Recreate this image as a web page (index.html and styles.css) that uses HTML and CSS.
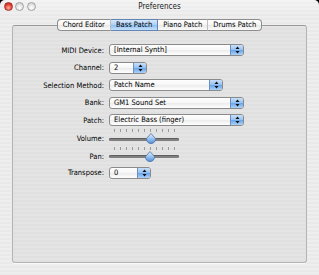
FILE: index.html
```html
<!DOCTYPE html>
<html lang="en">
<head>
    <meta charset="UTF-8">
    <title>Preferences</title>
    <link rel="stylesheet" href="styles.css">
</head>
<body>
<div class="window">
    <div class="titlebar">
        <div class="lights">
            <span class="light close"></span>
            <span class="light"></span>
            <span class="light"></span>
        </div>
        <div class="title">Preferences</div>
    </div>

    <div class="tabview">
        <div class="tabs">
            <span class="tab">Chord Editor</span>
            <span class="tab selected">Bass Patch</span>
            <span class="tab">Piano Patch</span>
            <span class="tab">Drums Patch</span>
        </div>

        <div class="panel">
            <div class="row">
                <label>MIDI Device:</label>
                <div class="popup w-long"><span class="value">[Internal Synth]</span><span class="arrows"><svg width="5" height="8" viewBox="0 0 5 8"><path d="M2.5 0.5 L4.5 3 H0.5 Z M0.5 5 H4.5 L2.5 7.5 Z"/></svg></span></div>
            </div>
            <div class="row">
                <label>Channel:</label>
                <div class="popup w-channel"><span class="value">2</span><span class="arrows"><svg width="5" height="8" viewBox="0 0 5 8"><path d="M2.5 0.5 L4.5 3 H0.5 Z M0.5 5 H4.5 L2.5 7.5 Z"/></svg></span></div>
            </div>
            <div class="row">
                <label>Selection Method:</label>
                <div class="popup w-method"><span class="value">Patch Name</span><span class="arrows"><svg width="5" height="8" viewBox="0 0 5 8"><path d="M2.5 0.5 L4.5 3 H0.5 Z M0.5 5 H4.5 L2.5 7.5 Z"/></svg></span></div>
            </div>
            <div class="row">
                <label>Bank:</label>
                <div class="popup w-long"><span class="value">GM1 Sound Set</span><span class="arrows"><svg width="5" height="8" viewBox="0 0 5 8"><path d="M2.5 0.5 L4.5 3 H0.5 Z M0.5 5 H4.5 L2.5 7.5 Z"/></svg></span></div>
            </div>
            <div class="row">
                <label>Patch:</label>
                <div class="popup w-long"><span class="value">Electric Bass (finger)</span><span class="arrows"><svg width="5" height="8" viewBox="0 0 5 8"><path d="M2.5 0.5 L4.5 3 H0.5 Z M0.5 5 H4.5 L2.5 7.5 Z"/></svg></span></div>
            </div>

            <!-- sliders -->
            <div class="row slider-row">
                <label>Volume:</label>
                <div class="slider">
                    <div class="ticks"><span></span><span></span><span></span><span></span><span></span><span></span><span></span><span></span><span></span><span></span><span></span></div>
                    <div class="track"></div>
                    <svg class="thumb" style="left: 60%" width="10" height="11" viewBox="0 0 10 11">
                        <defs>
                            <linearGradient id="thumbFill" x1="0" y1="0" x2="0" y2="1">
                                <stop offset="0" stop-color="#e4f0fc"/>
                                <stop offset="0.5" stop-color="#9cc6f2"/>
                                <stop offset="1" stop-color="#4f8fdc"/>
                            </linearGradient>
                        </defs>
                        <path d="M5 0.5 L9.5 5.5 C9.5 9 7.5 10.5 5 10.5 C2.5 10.5 0.5 9 0.5 5.5 Z" fill="url(#thumbFill)" stroke="#4d6f9e" stroke-width="0.8"/>
                    </svg>
                </div>
            </div>
            <div class="row slider-row">
                <label>Pan:</label>
                <div class="slider">
                    <div class="ticks"><span></span><span></span><span></span><span></span><span></span><span></span><span></span><span></span><span></span><span></span><span></span></div>
                    <div class="track"></div>
                    <svg class="thumb" style="left: 58.6%" width="10" height="11" viewBox="0 0 10 11">
                        <path d="M5 0.5 L9.5 5.5 C9.5 9 7.5 10.5 5 10.5 C2.5 10.5 0.5 9 0.5 5.5 Z" fill="url(#thumbFill)" stroke="#4d6f9e" stroke-width="0.8"/>
                    </svg>
                </div>
            </div>

            <div class="row">
                <label>Transpose:</label>
                <div class="popup w-transpose"><span class="value">0</span><span class="arrows"><svg width="5" height="8" viewBox="0 0 5 8"><path d="M2.5 0.5 L4.5 3 H0.5 Z M0.5 5 H4.5 L2.5 7.5 Z"/></svg></span></div>
            </div>
        </div>
    </div>
</div>
</body>
</html>
```

FILE: styles.css
```css
html {
    background: #000;
}

body {
    margin: 0;
    font-family: "DejaVu Sans Condensed", "DejaVu Sans", sans-serif;
    font-size: 7.5px;
    color: #000;
}

.window {
    width: 319px;
    height: 275px;
    border-radius: 5px 5px 0 0;
    overflow: hidden;
    background: repeating-linear-gradient(#eeeeee 0 2px, #e9e9e9 2px 4px);
}

/* Title bar */
.titlebar {
    height: 16px;
    display: grid;
    grid-template-columns: 1fr auto 1fr;
    background: linear-gradient(rgba(255, 255, 255, 0.35), rgba(255, 255, 255, 0));
}

.lights {
    display: flex;
    gap: 2.5px;
    padding: 2px 0 0 3.5px;
}

.light {
    width: 9px;
    height: 9px;
    box-sizing: border-box;
    border-radius: 50%;
    border: 1px solid #a3a3a3;
    background: radial-gradient(circle at 50% 70%, #ffffff, #e0e0e0 60%, #c8c8c8);
}

.light.close {
    border-color: #a1342a;
    background: radial-gradient(circle at 50% 70%, #ffb0a4, #e23a2d 60%, #b3231a);
}

.title {
    font-size: 8px;
    line-height: 14px;
    color: #1a1a1a;
}

/* Tabs */
.tabview {
    margin: 3px 12px 0;
}

.tabs {
    display: flex;
    justify-content: center;
    position: relative;
    z-index: 1;
    height: 12px;
    margin-bottom: -6px;
}

.tab {
    height: 12px;
    box-sizing: border-box;
    line-height: 10px;
    padding: 0 5px;
    border: 1px solid #8e8e8e;
    border-left: none;
    border-right-color: #bdbdbd;
    background: linear-gradient(#ffffff, #f5f5f5 50%, #e8e8e8 50%, #fbfbfb);
    white-space: nowrap;
}

.tab:first-child {
    border-left: 1px solid #8e8e8e;
    border-radius: 4px 0 0 4px;
}

.tab:last-child {
    border-right-color: #8e8e8e;
    border-radius: 0 4px 4px 0;
}

.tab.selected {
    border-color: #6485b3;
    background: linear-gradient(#d6e8fc, #abcff5 50%, #8cbcf0 50%, #c6e2fb);
}

/* Panel */
.panel {
    height: 238px;
    box-sizing: border-box;
    padding-top: 15.25px;
    border: 1px solid #b4b4b4;
    border-top-color: #9a9a9a;
    border-radius: 3px;
    background: repeating-linear-gradient(#e4e4e4 0 2px, #e0e0e0 2px 4px);
    box-shadow: 0 1px 0 #f9f9f9;
}

.row {
    display: flex;
    align-items: center;
    height: 17.5px;
}

.row label {
    width: 91px;
    margin-right: 5px;
    text-align: right;
    white-space: nowrap;
}

.slider-row {
    align-items: flex-start;
}

.slider-row label {
    margin-top: 5.5px;
    line-height: 10px;
}

/* Pop-up buttons */
.popup {
    height: 12px;
    box-sizing: border-box;
    display: flex;
    border: 1px solid #8a8a8a;
    border-radius: 3px;
    overflow: hidden;
    background: linear-gradient(#ffffff, #f6f6f6 50%, #ebebeb 50%, #ffffff);
}

.popup .value {
    flex: 1;
    padding-left: 4px;
    line-height: 10px;
    white-space: nowrap;
}

.popup .arrows {
    width: 12px;
    display: flex;
    align-items: center;
    justify-content: center;
    border-left: 1px solid #6d8fbf;
    background: linear-gradient(#c8e0f9, #93c0f1 50%, #65a3e9 50%, #acd2f8);
}

.popup .arrows path {
    fill: #111;
}

.w-long { width: 135px; }
.w-channel { width: 38px; }
.w-method { width: 114px; }
.w-transpose { width: 42px; }

/* Sliders */
.slider {
    width: 70px;
    height: 17.5px;
    position: relative;
}

.ticks {
    display: flex;
    justify-content: space-between;
    height: 3px;
    margin-top: 0.5px;
    padding: 0 4px 0 5px;
}

.ticks span {
    width: 1px;
    background: #9a9a9a;
}

.track {
    height: 3px;
    margin-top: 5.5px;
    border-radius: 2px;
    background: #808080;
    box-shadow: inset 0 1px 0 #5e5e5e;
}

.thumb {
    position: absolute;
    top: 4.5px;
    margin-left: -5px;
}
```
